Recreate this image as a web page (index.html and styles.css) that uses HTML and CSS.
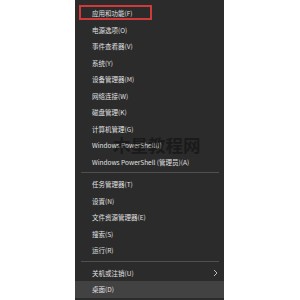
FILE: index.html
```html
<html>
<head>
<meta charset="UTF-8">
<link rel="stylesheet" href="styles.css">
</head>
<body>
<div class="menu">
  <div class="item">应用和功能(F)</div>
  <div class="item">电源选项(O)</div>
  <div class="item">事件查看器(V)</div>
  <div class="item">系统(Y)</div>
  <div class="item">设备管理器(M)</div>
  <div class="item">网络连接(W)</div>
  <div class="item">磁盘管理(K)</div>
  <div class="item">计算机管理(G)</div>
  <div class="item">Windows PowerShell(I)</div>
  <div class="item">Windows PowerShell (管理员)(A)</div>
  <div class="sep"></div>
  <div class="item">任务管理器(T)</div>
  <div class="item">设置(N)</div>
  <div class="item">文件资源管理器(E)</div>
  <div class="item">搜索(S)</div>
  <div class="item">运行(R)</div>
  <div class="sep"></div>
  <div class="item sub">关机或注销(U)
    <svg class="chev" width="5" height="8" viewBox="0 0 5 8"><polyline points="1,1 4,4 1,7" fill="none" stroke="#bdbdbd" stroke-width="1"/></svg>
  </div>
  <div class="item active">桌面(D)</div>

  <!-- red annotation box + watermark sit on top -->
  <div class="redbox"></div>
  <div class="mark">木星教程网</div>
</div>
</body>
</html>
```
FILE: styles.css
```css
body {
  margin: 0;
  background: #fff;
  font-family: "Microsoft YaHei", "Noto Sans CJK SC", "Noto Sans", sans-serif;
}

.menu {
  position: relative;
  width: 149px;
  height: 300px;
  margin-left: 75px;
  padding-top: 5px;
  box-sizing: border-box;
  background: #2b2b2b;
  color: #e0e0e0;
  font-size: 6.5px;
  overflow: hidden;
}

.item {
  height: 16.5px;
  line-height: 16.5px;
  padding-left: 17px;
  white-space: nowrap;
}

.item.sub {
  display: flex;
  align-items: center;
  justify-content: space-between;
  padding-right: 6px;
}

.item.active {
  background: #424242;
}

.redbox {
  position: absolute;
  left: 4px;
  top: 5px;
  width: 73px;
  height: 15px;
  border: 2px solid #cf3a3a;
  box-sizing: border-box;
}

.sep {
  height: 1px;
  margin: 2px 5px 3px 6px;
  background: #4f4f4f;
}

.mark {
  position: absolute;
  left: 38px;
  top: 132px;
  font-size: 17.5px;
  font-weight: bold;
  color: rgba(0, 0, 0, 0.4);
  white-space: nowrap;
}
```
